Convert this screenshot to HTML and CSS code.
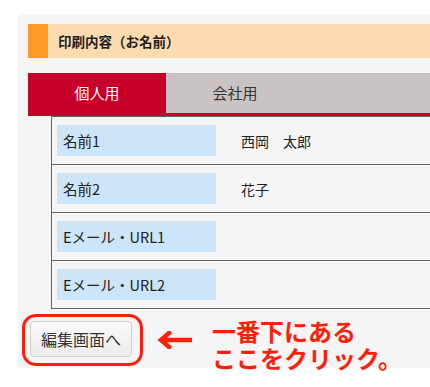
FILE: index.html
```html
<!DOCTYPE html>
<html lang="ja">
<head>
<meta charset="utf-8">
<link rel="stylesheet" href="styles.css">
</head>
<body>
<div class="panel">
  <div class="heading">印刷内容（お名前）</div>
  <div class="tabs">
    <div class="tab active">個人用</div>
    <div class="tab">会社用</div>
  </div>
  <div class="table">
    <div class="row"><div class="label">名前1</div><div class="value">西岡　太郎</div></div>
    <div class="row"><div class="label">名前2</div><div class="value">花子</div></div>
    <div class="row"><div class="label">Eメール・URL1</div><div class="value"></div></div>
    <div class="row"><div class="label">Eメール・URL2</div><div class="value"></div></div>
  </div>
  <div class="actions">
    <button class="edit">編集画面へ</button>
    <span class="ring"></span>
  </div>
</div>
<div class="note">
  <svg class="arrow" width="36" height="18" viewBox="0 0 36 18">
    <path d="M35 9 H5" stroke="#ff1e0a" stroke-width="4.5" fill="none"/>
    <path d="M12 2 L4 9 L12 16" stroke="#ff1e0a" stroke-width="4.5" fill="none" stroke-linejoin="miter" stroke-linecap="square"/>
  </svg>
  <div class="note-text">
    <div class="note-line">一番下にある</div>
    <div class="note-line">ここをクリック。</div>
  </div>
</div>
</body>
</html>
```
FILE: styles.css
```css
html, body {
  margin: 0;
  padding: 0;
  background: #fff;
  font-family: "Noto Sans CJK JP", "Noto Sans", sans-serif;
  color: #222;
}
body {
  position: relative;
  width: 430px;
  height: 387px;
  overflow: hidden;
}
.panel {
  margin: 14px 0 0 18px;
  background: #f5f5f5;
  padding: 10px 0 11px 10px;
  height: 333px;
}
.heading {
  height: 34px;
  line-height: 34px;
  background: #fddbb0;
  border-left: 20px solid #ff9a28;
  padding-left: 10px;
  font-size: 13.5px;
  font-weight: bold;
  color: #222;
  margin-bottom: 15px;
}
.tabs {
  display: flex;
  height: 40px;
  background: #c9c3c3;
  border-bottom: 3px solid #c70029;
}
.tab {
  width: 138px;
  text-align: center;
  line-height: 40px;
  font-size: 15px;
  color: #333;
}
.tab.active {
  background: #c70029;
  color: #fff;
  height: 43px;
}
.table {
  margin-left: 23px;
  border-left: 1px solid #666;
  border-top: 1px solid #666;
}
.row {
  display: flex;
  align-items: center;
  height: 47px;
  border-bottom: 1px solid #666;
  padding-left: 5px;
}
.label {
  width: 153px;
  height: 31px;
  line-height: 31px;
  background: #cce5f8;
  padding-left: 6px;
  font-size: 14.5px;
  color: #222;
}
.value {
  margin-left: 25px;
  font-size: 14px;
  color: #222;
}
.actions {
  position: relative;
  margin: 12px 0 0 2px;
  height: 36px;
}
.edit {
  width: 102px;
  height: 36px;
  padding: 0 10px;
  font-family: inherit;
  font-size: 16px;
  color: #333;
  background: linear-gradient(#fafafa, #ececec);
  border: 1px solid #cfcfcf;
  border-radius: 4px;
  text-align: left;
}
.ring {
  position: absolute;
  left: -8px;
  top: -7px;
  width: 115px;
  height: 46px;
  border: 3px solid #ff1e0a;
  border-radius: 14px;
}
.note {
  position: absolute;
  left: 157px;
  top: 317px;
  display: flex;
  align-items: flex-start;
}
.arrow {
  margin-top: 14px;
}
.note-text {
  margin-left: 19px;
  font-size: 24px;
  font-weight: bold;
  color: #ff1e0a;
}
.note-line {
  height: 27px;
  line-height: 27px;
  overflow: visible;
  white-space: nowrap;
}
```
